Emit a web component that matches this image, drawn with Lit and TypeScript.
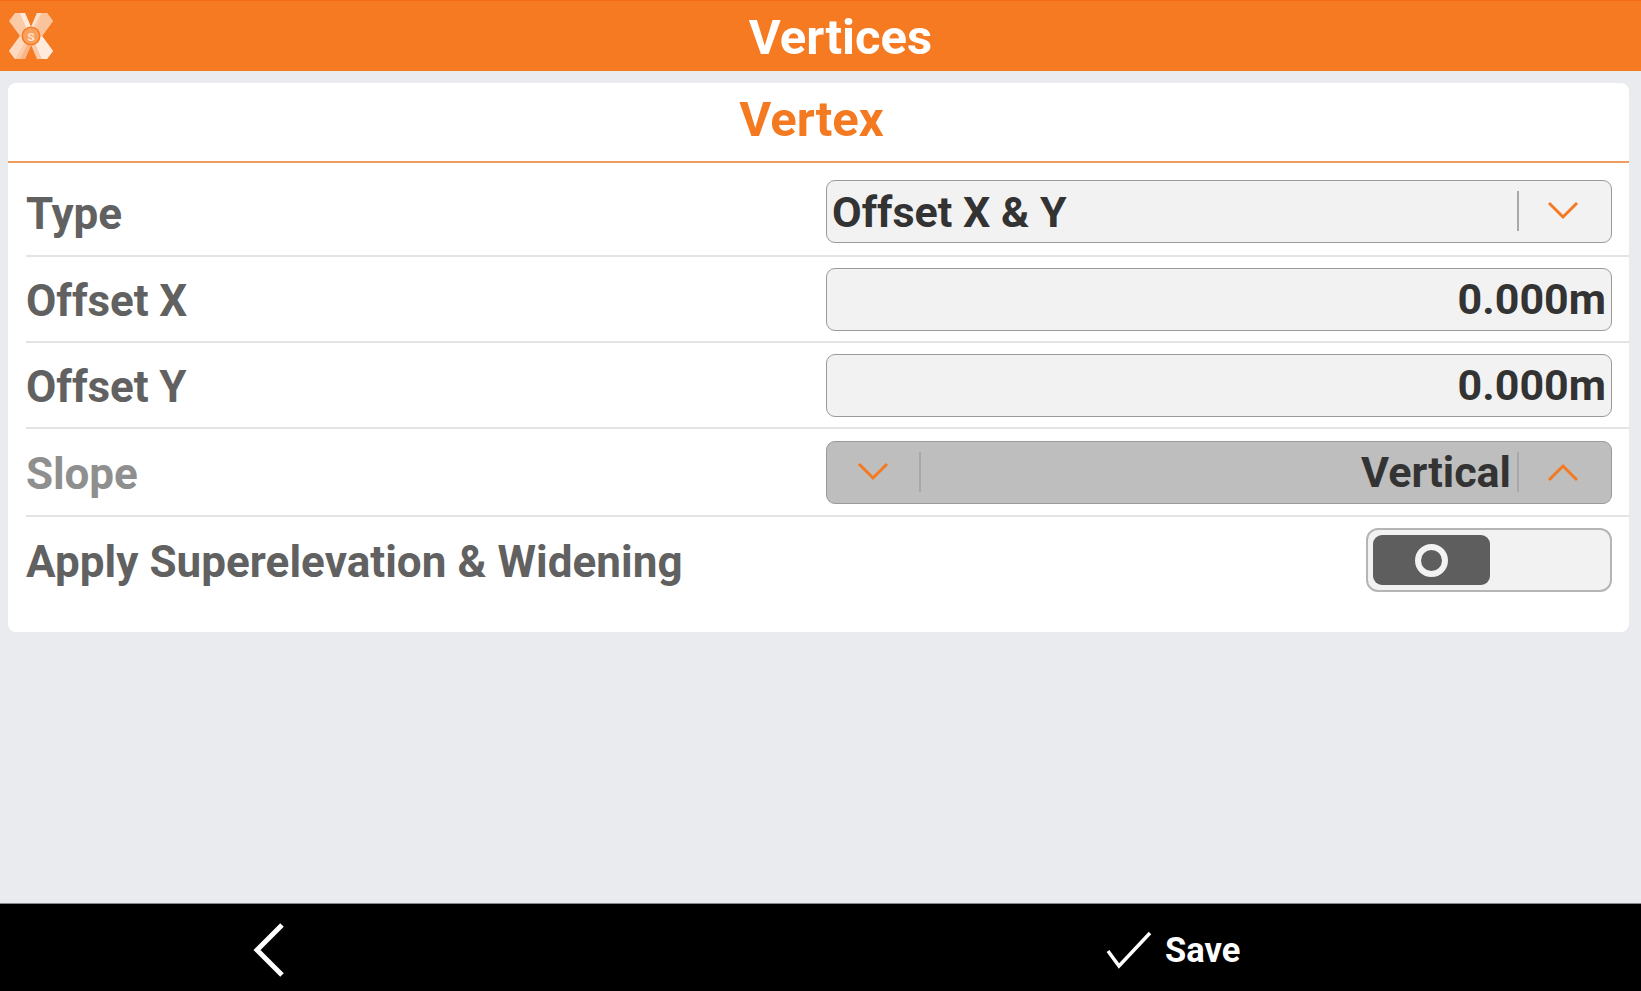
import {LitElement, html, css, svg} from 'lit';
import {customElement} from 'lit/decorators.js';

const chevron = (up: boolean) => svg`<svg class="chev" width="34" height="22" viewBox="0 0 34 22">
  <path d=${up ? 'M3 19 L17 5 L31 19' : 'M3 3 L17 17 L31 3'} fill="none" stroke="#f47a22" stroke-width="3"/>
</svg>`;

// the X is one outline with lighter and darker facets laid over its arms
const logo = svg`<svg class="logo" width="46" height="48" viewBox="0 0 46 48">
  <path d="M7 1 L17 1 L23 15 L29 1 L39 1 L45 9 L34 24 L45 39 L39 47 L29 47 L23 33 L17 47 L7 47 L1 39 L12 24 L1 9 Z" fill="#fbcba8"/>
  <path d="M12 1 L17 1 L23 15 L20 20 Z" fill="#ffeadb"/>
  <path d="M29 1 L33 1 L24 19 L23 15 Z" fill="#fde0cb"/>
  <path d="M34 1 L39 1 L45 9 L34 24 L28 21 Z" fill="#fbc39b"/>
  <path d="M7 47 L1 39 L12 24 L18 28 Z" fill="#fdd9c0"/>
  <path d="M12 47 L17 47 L23 33 L21 29 Z" fill="#f9b587"/>
  <path d="M26 29 L34 24 L45 39 L39 47 L34 47 Z" fill="#ffeadb"/>
  <circle cx="23" cy="24" r="9.5" fill="#f57a22"/>
  <circle cx="23" cy="24" r="8" fill="#f9a05f"/>
  <text x="23" y="29" text-anchor="middle" font-size="15" font-weight="500" font-family="Roboto, sans-serif" fill="#fde4d2">s</text>
</svg>`;

@customElement('app-root')
class AppRoot extends LitElement {
  static styles = css`
  :host {
    display: flex;
    flex-direction: column;
    height: 991px;
    background: #e9ebef;
    font-family: Roboto, "Liberation Sans", sans-serif;
    font-weight: 700;
    overflow: hidden;
  }
  .topbar {
    height: 71px;
    flex: none;
    box-sizing: border-box;
    background: #f57a22;
    border-top: 1px solid #f26c12;
    position: relative;
    display: flex;
    align-items: center;
    justify-content: center;
    color: #fff;
    font-size: 49px;
    padding-left: 40px;
    padding-top: 3px;
  }
  .logo {
    position: absolute;
    left: 8px;
    top: 11px;
  }
  .card {
    flex: none;
    height: 549px;
    margin: 12px 12px 0 8px;
    background: #fff;
    border-radius: 8px;
    box-sizing: border-box;
  }
  .card-title {
    height: 80px;
    box-sizing: border-box;
    border-bottom: 2px solid #ef9a5f;
    color: #f47a22;
    font-size: 49px;
    display: flex;
    align-items: center;
    justify-content: center;
    padding-bottom: 6px;
    padding-right: 14px;
  }
  .rows {
    padding: 0 0 0 18px;
  }
  .row {
    display: flex;
    align-items: center;
    justify-content: space-between;
    box-sizing: border-box;
    border-bottom: 2px solid #e4e4e4;
    color: #616161;
    font-size: 44px;
  }
  .row.last {
    border-bottom: none;
    height: 86px;
  }
  .row.dim {
    color: #8f8f8f;
  }
  .h-type { height: 94px; padding-top: 4px; }
  .h-x { height: 86px; }
  .h-y { height: 86px; }
  .h-slope { height: 88px; }
  .label {
    white-space: nowrap;
    padding-top: 3px;
    letter-spacing: -0.1px;
  }
  .h-type .label {
    padding-top: 5px;
  }
  .last .label {
    letter-spacing: 0.05px;
  }
  .field {
    width: 786px;
    height: 63px;
    box-sizing: border-box;
    margin-right: 17px;
    background: #f2f2f2;
    border: 1.5px solid #9a9a9a;
    border-radius: 9px;
    color: #333;
    font-size: 43px;
    display: flex;
    align-items: center;
    padding: 0 5px;
    white-space: nowrap;
  }
  .field.num {
    justify-content: flex-end;
  }
  .field.select {
    padding-right: 0;
  }
  .field.select .value {
    flex: 1;
    padding-top: 2px;
  }
  .field.spin {
    background: #bebebe;
    padding: 0;
  }
  .sep {
    width: 2px;
    height: 40px;
    background: #a8a8a8;
    flex: none;
  }
  .chev-box {
    width: 92px;
    box-sizing: border-box;
    flex: none;
    display: flex;
    justify-content: center;
    align-items: center;
  }
  .chev-box.end {
    padding-right: 4px;
  }
  .spin .value {
    flex: 1;
    text-align: right;
    padding-right: 6px;
  }
  .toggle {
    width: 246px;
    height: 64px;
    box-sizing: border-box;
    margin-right: 17px;
    background: #f2f2f2;
    border: 2.5px solid #b5b5b5;
    border-radius: 12px;
    padding: 5px;
    display: flex;
  }
  .thumb {
    width: 117px;
    height: 50px;
    background: #5e5e5e;
    border-radius: 9px;
    display: flex;
    align-items: center;
    justify-content: center;
  }
  .thumb span {
    width: 33px;
    height: 33px;
    box-sizing: border-box;
    border: 6px solid #f2f2f2;
    border-radius: 50%;
  }
  .spacer {
    flex: 1;
  }
  .bottombar {
    height: 88px;
    flex: none;
    background: #000;
    border-top: 1px solid #888;
    box-sizing: border-box;
    display: flex;
    align-items: center;
    color: #fff;
  }
  .back {
    margin-left: 253px;
    margin-top: 5px;
  }
  .save {
    margin-left: 821px;
    margin-top: 5px;
    display: flex;
    align-items: center;
    gap: 13px;
    font-size: 34.5px;
  }
  `;

  render() {
    return html`
      <div class="topbar">${logo}Vertices</div>
      <div class="card">
        <div class="card-title">Vertex</div>
        <div class="rows">
          <div class="row h-type">
            <span class="label">Type</span>
            <div class="field select">
              <span class="value">Offset X &amp; Y</span>
              <div class="sep"></div>
              <div class="chev-box end">${chevron(false)}</div>
            </div>
          </div>
          <div class="row h-x">
            <span class="label">Offset X</span>
            <div class="field num">0.000m</div>
          </div>
          <div class="row h-y">
            <span class="label">Offset Y</span>
            <div class="field num">0.000m</div>
          </div>
          <div class="row h-slope dim">
            <span class="label">Slope</span>
            <div class="field spin">
              <div class="chev-box">${chevron(false)}</div>
              <div class="sep"></div>
              <span class="value">Vertical</span>
              <div class="sep"></div>
              <div class="chev-box end">${chevron(true)}</div>
            </div>
          </div>
          <div class="row last">
            <span class="label">Apply Superelevation &amp; Widening</span>
            <div class="toggle"><div class="thumb"><span></span></div></div>
          </div>
        </div>
      </div>
      <div class="spacer"></div>
      <div class="bottombar">
        <svg class="back" width="32" height="54" viewBox="0 0 32 54">
          <path d="M29 2 L4 27 L29 52" fill="none" stroke="#fff" stroke-width="5"/>
        </svg>
        <div class="save">
          <svg width="46" height="38" viewBox="0 0 46 38">
            <path d="M2 20 L13 35 L44 2" fill="none" stroke="#fff" stroke-width="3.5"/>
          </svg>
          <span>Save</span>
        </div>
      </div>
    `;
  }
}
